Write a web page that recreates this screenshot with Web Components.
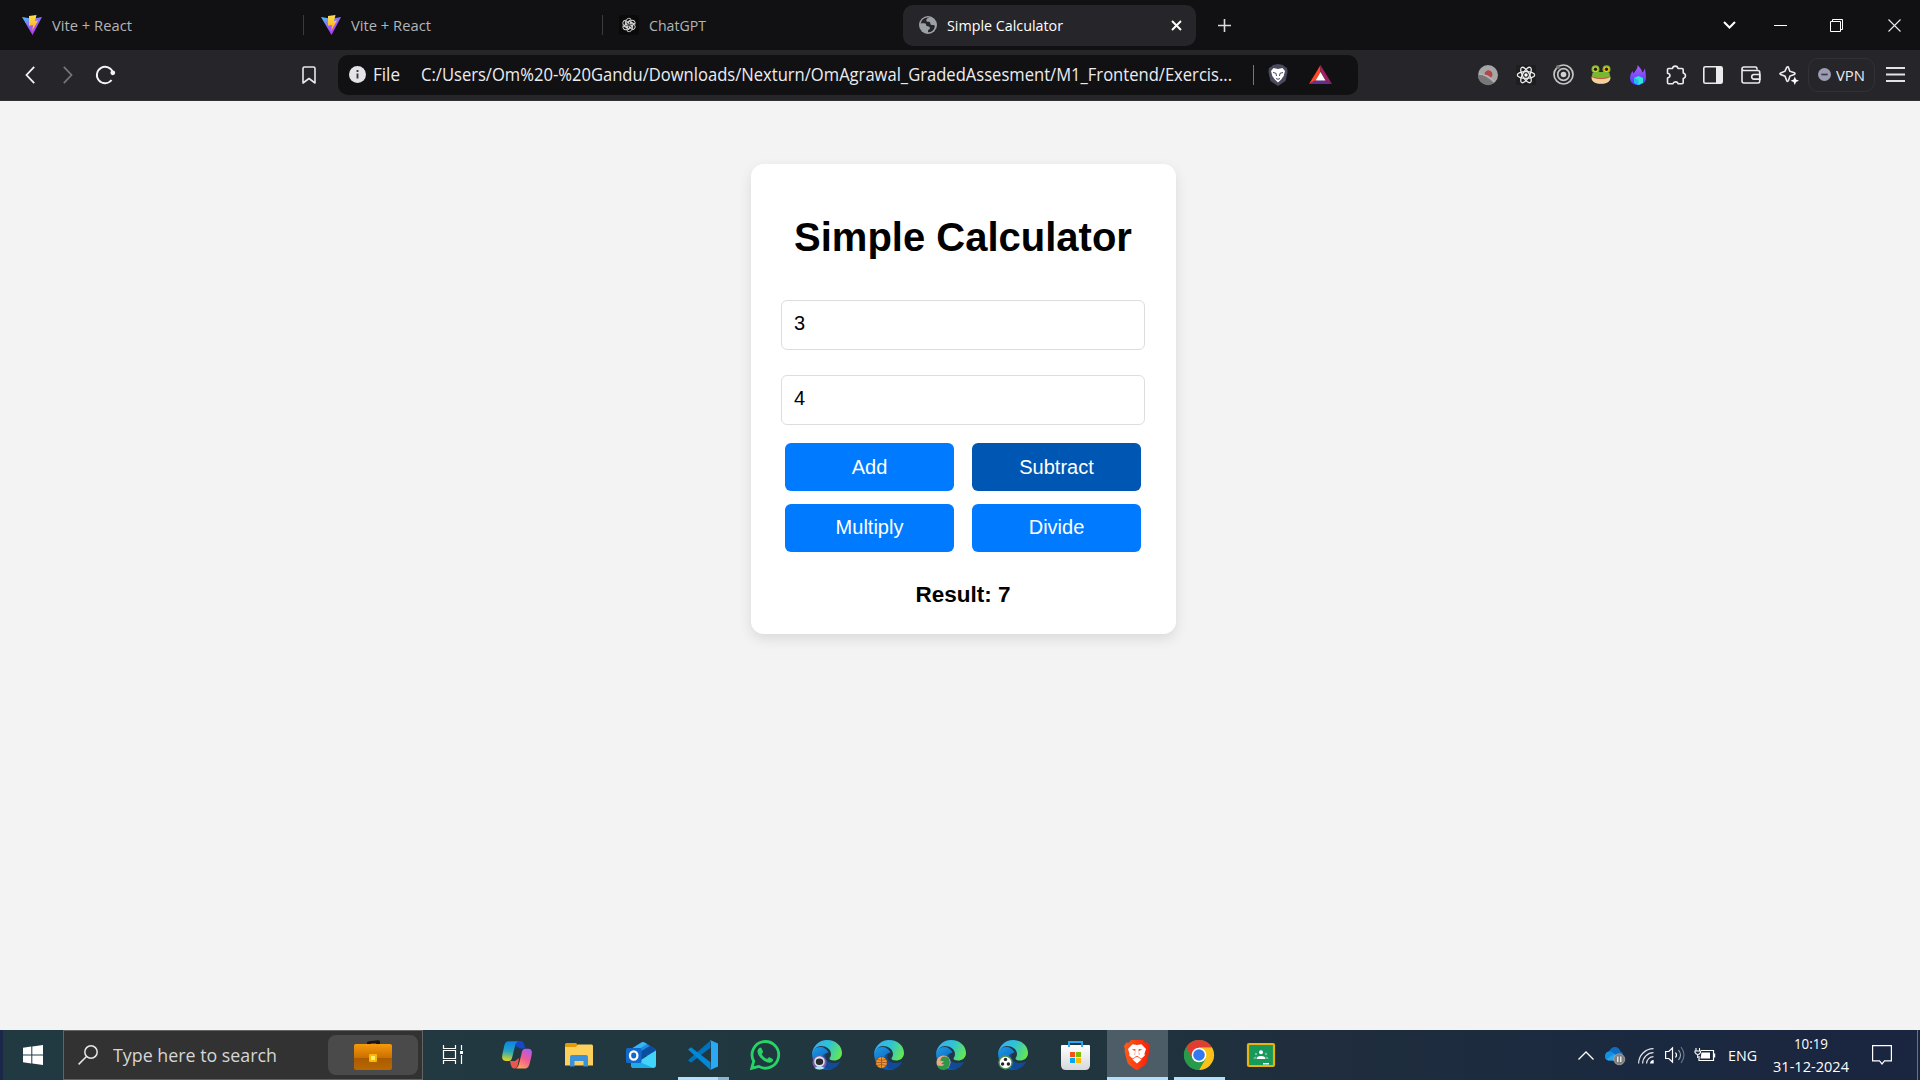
<!DOCTYPE html>
<html lang="en">
<head>
<meta charset="utf-8">
<title>Simple Calculator</title>
<style>
html,body{margin:0;height:100%;overflow:hidden;background:#f3f3f3}
</style>
</head>
<body>
<desktop-screen></desktop-screen>
<script>
const UI = '"Open Sans","Noto Sans",sans-serif';
const define = (name, html, init) => customElements.define(name, class extends HTMLElement {
  constructor() {
    super();
    this.attachShadow({ mode: 'open' });
  }
  connectedCallback() {
    this.shadowRoot.innerHTML = typeof html === 'function' ? html(this) : html;
    if (init) init(this);
  }
});

/* ---------- icons: [width, height, markup] ---------- */
const edge = badge => [30, 30, `
<defs><linearGradient id="a" x1="0" y1=".3" x2="1" y2=".6"><stop offset="0" stop-color="#38aef0"/><stop offset=".5" stop-color="#2fc3d6"/><stop offset="1" stop-color="#66e84f"/></linearGradient>
<linearGradient id="b" x1="0" y1="0" x2=".6" y2="1"><stop offset="0" stop-color="#1e9be6"/><stop offset="1" stop-color="#0a56b5"/></linearGradient></defs>
<path d="M.1 13.500C0 22 6 30 15 30c2 0 4-.4 5.500-1C14 28 10.500 23 11 18c.3-3 2-5 5.500-5.500C15 9 11.500 7 8 7 3.500 7 .5 10 .1 13.500z" fill="url(#b)"/>
<path d="M12 14.500C9 18 9.500 28 18.500 29.600c4-1 7.500-3.600 9.300-7 .3-.7-.2-1-.8-.7-6 2.500-12.500.5-13.500-4-.3-1.500 0-3 1-4z" fill="#114a99"/>
<path d="M.1 13.500C1 6 7 0 15 0c9 0 15 6 15 13 0 5-4 7.500-8 7.500-3 0-4.500-1-4.500-2 0-1 1.500-1.500 1.500-4.500C19 9 14 6 9 6 5 6 1.500 9 .1 13.500z" fill="url(#a)"/>${badge}`];

const ICONS = {
vite: [20, 20, `<defs><linearGradient id="a" x1="0" y1="0" x2=".6" y2="1"><stop offset="0" stop-color="#41c8ff"/><stop offset=".5" stop-color="#8d6bff"/><stop offset="1" stop-color="#c02cf5"/></linearGradient><linearGradient id="b" x1="0" y1="0" x2="0" y2="1"><stop offset="0" stop-color="#ffe04a"/><stop offset="1" stop-color="#ffa41c"/></linearGradient></defs><path d="M0 2l10.500 1.800L20 2l-9.500 18z" fill="url(#a)"/><path d="M7 1l7.500-1-1.500 6 3-.4L10.200 16l.8-6-4 .8z" fill="url(#b)"/>`],
gpt: [20, 20, `<rect width="20" height="20" rx="3" fill="#0a0a0a"/><g transform="translate(10 10) scale(.88) translate(-10 -10)" fill="none" stroke="#dcdcdc" stroke-width="1.050">${[0,60,120,180,240,300].map(r=>`<path transform="rotate(${r} 10 10)" d="M10 7.400L6.800 5.500V5A3.200 3.200 0 0 1 12.500 3.700L9.200 5.700V9.300M6.800 5.500V10.800"/>`).join('')}</g>`],
globe: [18, 18, `<circle cx="9" cy="9" r="9" fill="#9ba1a7"/><path d="M10.500 1.800c-2 .2-3.200 1-3.200 2.800 0 1 .8 1.200 2 1.200 1.500 0 2 .6 2 1.600 0 1.300 1 1.600 2.700 1.600 1.400 0 2 .6 1.700 2.200-.8 3-3.200 5-6.700 5l.2-2.500c1.400-.2 1.700-1 1.700-1.800 0-1.200-1-1.600-2.200-1.700-1.400-.2-1.600-.7-1.600-1.500C7.100 7.500 5.500 7 1.700 7.400 2.500 4.500 4 3 5.500 2.300 7 1.600 9 1.400 10.500 1.800z" fill="#26252a"/>`],
tabx: [11, 11, `<path d="M1 1l9 9M10 1l-9 9" stroke="#fff" stroke-width="1.900"/>`],
plus: [13, 13, `<path d="M6.500 0v13M0 6.500h13" stroke="#dcdcde" stroke-width="1.600"/>`],
chev: [13, 8, `<path d="M1 1l5.500 5.500L12 1" fill="none" stroke="#fff" stroke-width="2"/>`],
min: [13, 13, `<path d="M0 6.500h13" stroke="#fff"/>`],
restore: [13, 13, `<path d="M.5 2.500h10v10H.5zM2.500 2.500v-2h10v10h-2" fill="none" stroke="#fff"/>`],
close: [13, 13, `<path d="M.5.5l12 12M12.500.5l-12 12" stroke="#ececec" stroke-width="1.100"/>`],
back: [10, 18, `<path d="M9.200.8L1.500 9l7.700 8.200" fill="none" stroke="#f3f3f3" stroke-width="1.800"/>`],
fwd: [10, 18, `<path d="M.8.8L8.500 9 .8 17.200" fill="none" stroke="#747378" stroke-width="1.800"/>`],
reload: [20, 19, `<path d="M16.900 7.500A8.200 8.200 0 1 0 15.600 15" fill="none" stroke="#f3f3f3" stroke-width="1.900"/><circle cx="16.800" cy="7.800" r="2.400" fill="#f3f3f3"/>`],
bookmark: [14, 18, `<path d="M1 2.500Q1 1 2.500 1h9Q13 1 13 2.500V17l-6-4.500L1 17z" fill="none" stroke="#e8e8ea" stroke-width="1.600" stroke-linejoin="round"/>`],
info: [17, 17, `<circle cx="8.500" cy="8.500" r="8.500" fill="#e4e3e8"/><path d="M8.500 7.500v5M8.500 4v2" stroke="#3b3a3f" stroke-width="1.900"/>`],
lion: [20, 22, `<path d="M5 1l5-1 5 1 1.500 1.500L19 4l.6 4-2.100 9-7.500 5-7.500-5L.4 8 1 4l2.500-1.500z" fill="#4a4a5e"/><path d="M5.500 4l4.500 1 4.500-1L17 7l-1.300 5-2.500 3.500L10 18.500 6.800 15.500 4.300 12 3 7z" fill="#fff"/><path d="M5 8.500l3 .8.500 2.700M15 8.500l-3 .8-.5 2.700M8 14.500l2 .8 2-.8" stroke="#4a4a5e" fill="none" stroke-width="1"/>`],
bat: [23, 19, `<path d="M11.500 0L0 19l6.500-3.500L11.500 7z" fill="#ff4724"/><path d="M11.500 0L23 19l-6.500-3.500L11.500 7z" fill="#9e1f63"/><path d="M0 19h23l-6.500-3.700h-10z" fill="#662d91"/><path d="M11.500 7l5 8.500h-10z" fill="#fff"/>`],
disc: [20, 20, `<circle cx="10" cy="10" r="10" fill="#a6a6a6"/><path d="M0 9.500Q7 9 16 18A10 10 0 0 1 0 9.500z" fill="#777"/><path d="M6.500 9.500A4 4 0 1 1 13 12.500Q10 9.500 6.500 9.500" fill="#b64549"/><path d="M1 9Q8 9 17 17" stroke="#bbb" fill="none"/>`],
react: [20, 20, `<rect width="20" height="20" fill="#1e1e20"/><g fill="none" stroke="#ececec" stroke-width="1.300"><ellipse cx="10" cy="10" rx="8.700" ry="3.400"/><ellipse cx="10" cy="10" rx="8.700" ry="3.400" transform="rotate(60 10 10)"/><ellipse cx="10" cy="10" rx="8.700" ry="3.400" transform="rotate(120 10 10)"/></g><circle cx="10" cy="10" r="1.700" fill="#fff"/>`],
rings: [21, 21, `<g fill="none" stroke="#c6c6c6"><circle cx="10.500" cy="10.500" r="9.500" stroke-width="1.700"/><circle cx="10.500" cy="10.500" r="5.800" stroke-width="1.700"/></g><circle cx="10.500" cy="10.500" r="2.800" fill="#d0d0d0"/><circle cx="5" cy="3" r="2" fill="#777"/>`],
frog: [20, 19, `<path d="M1.500 8h17l1 5c0 4-5 5.500-9.500 5.500S.5 17 .5 13z" fill="#78b72f"/><path d="M.8 11.500c4 2.500 14.400 2.500 18.400 0C20 17 15 18.800 10 18.800S0 17 .8 11.500z" fill="#f6cf9f"/><path d="M.8 11.500c4 2.800 14.400 2.800 18.400 0" fill="none" stroke="#b53a2d" stroke-width=".8"/><circle cx="4.500" cy="4.200" r="4" fill="#78b72f"/><circle cx="15.500" cy="4.200" r="4" fill="#78b72f"/><path d="M3 7h14v4H3z" fill="#78b72f"/><circle cx="4.500" cy="4.200" r="2.800" fill="#f4c51c"/><circle cx="15.500" cy="4.200" r="2.800" fill="#f4c51c"/><circle cx="4.500" cy="4.200" r="1.700" fill="#282018"/><circle cx="15.500" cy="4.200" r="1.700" fill="#282018"/>`],
flame: [16, 20, `<defs><linearGradient id="a" x1=".5" y1="0" x2=".5" y2="1"><stop offset="0" stop-color="#b45cf5"/><stop offset="1" stop-color="#4b3dff"/></linearGradient></defs><path d="M7.500 0c.3 4-2.500 6-4 8.500-.6-.8-.8-1.500-.7-2.800C.8 8.500-.2 11 .1 14c.6 4 4 6 7.900 6s7.600-2.500 7.900-6c.2-3-.2-6-1-10.500-1 2-1.200 3-2.600 4C12 4.500 10 3 7.500 0z" fill="url(#a)"/><path d="M8.500 11l4.500 2v4.700L8.500 20 4 17.700V13z" fill="#2ee8d5"/><path d="M4 13l4.500 2v5L4 17.700z" fill="#26b7f0"/>`],
puzzle: [20, 20, `<path d="M1.500 4.500Q1.500 3.500 2.500 3.500H6.500C7 .3 11.500.3 12 3.500h4q1.200 0 1.200 1.200V8c3 .7 3 5 0 5.500v4q0 1.200-1.200 1.200H12c-.3-2.500-4.500-2.500-5 0H2.700q-1.200 0-1.200-1.200V13c3.300-.6 3.300-4.200 0-4.800z" fill="none" stroke="#ebebed" stroke-width="1.600" stroke-linejoin="round"/>`],
panel: [20, 18, `<rect x=".8" y=".8" width="18.400" height="16.400" rx="1.500" fill="none" stroke="#ebebed" stroke-width="1.600"/><path d="M13 1h6v16h-6z" fill="#ebebed"/>`],
wallet: [20, 18, `<path d="M1 3Q1 1 3 1h11.500q1.500 0 1.500 2.500M1 3q0 1.500 2 1.500h14q1.700 0 1.700 1.700V15.500q0 1.500-1.700 1.500H3q-2 0-2-2zM19 8.500h-6q-2.300 0-2.300 2.300t2.300 2.300h6z" fill="none" stroke="#ebebed" stroke-width="1.600"/>`],
spark: [20, 20, `<path d="M8.500 1.300Q9.300 1 9.600 2.200l1.200 3.500 4.500 1.600q1.500.9 0 1.700l-4.300 1.600-1.600 4.500q-.9 1.500-1.700 0L6 10.700 1.700 9q-1.500-.8 0-1.600L6 5.700 7.600 2.200Q8 1.200 8.500 1.300z" fill="none" stroke="#ebebed" stroke-width="1.600" transform="translate(0 .5)"/><path d="M15.800 11.500l1.200 3 3 1.300-3 1.200-1.200 3-1.200-3-3-1.200 3-1.300z" fill="#fff"/>`],
vpn: [13, 13, `<circle cx="6.500" cy="6.500" r="6.500" fill="#9c9db3"/><path d="M3.300 6.500h6.400" stroke="#3c3c4b" stroke-width="1.700"/>`],
menu: [19, 15, `<path d="M0 1h19M0 7.500h19M0 14h19" stroke="#e3e3e6" stroke-width="1.800"/>`],
win: [20, 20, `<path d="M0 2.800L8.300 1.600V9.500H0zM9.300 1.400L20 0v9.500H9.300zM0 10.500h8.300v8L0 17.200zM9.300 10.500H20V20l-10.700-1.400z" fill="#fff"/>`],
search: [20, 20, `<circle cx="13" cy="7" r="6.200" fill="none" stroke="#e8e8e8" stroke-width="1.500"/><path d="M8.500 11.500L.6 19.400" stroke="#e8e8e8" stroke-width="1.500"/>`],
chest: [38, 30, `<defs><linearGradient id="a" x1="0" y1="0" x2="0" y2="1"><stop offset="0" stop-color="#f79a0b"/><stop offset="1" stop-color="#c96f00"/></linearGradient><linearGradient id="b" x1="0" y1="0" x2="0" y2="1"><stop offset="0" stop-color="#994c00"/><stop offset="1" stop-color="#b96800"/></linearGradient></defs><path d="M13 4V2.500Q13 1.500 15 1.300L24 .2q2-.2 2 1.500V4h-4V3h-5v1z" fill="#161616"/><rect y="4" width="38" height="26" rx="2" fill="url(#b)"/><path d="M0 6q0-2 2-2h34q2 0 2 2v12H0z" fill="url(#a)"/><rect x="15" y="14" width="8" height="8" rx="1" fill="#f7b900"/><rect x="17" y="16" width="4" height="4" fill="#fff06a"/>`],
taskview: [20, 20, `<path d="M.5 0v3.500h12V0M.5 5.500h12v8H.5zM.5 19v-3.500h12V19M18.500 0v5M18.500 10v9" fill="none" stroke="#fff" stroke-width="1.200"/><rect x="17" y="6" width="3" height="3" fill="#fff"/>`],
copilot: [30, 28, `<defs><linearGradient id="a" x1=".4" y1="0" x2=".3" y2="1"><stop offset="0" stop-color="#0d83e8"/><stop offset=".5" stop-color="#22a6c0"/><stop offset="1" stop-color="#e8d51c"/></linearGradient><linearGradient id="b" x1=".8" y1="0" x2=".3" y2="1"><stop offset="0" stop-color="#ab5cf5"/><stop offset=".5" stop-color="#f25a91"/><stop offset="1" stop-color="#ffa35a"/></linearGradient></defs><path d="M14 0h5c2 0 3 2 3.700 5l.6 2.500H18L14 5z" fill="#1548c8"/><path d="M8 20h5l4-3-1 6c-.7 3-1.600 4.500-4 4.500-2.500 0-3.300-4-4-7.500z" fill="#ee554f"/><path d="M7 .2h9.500C14 .2 13 5 12 9l-1.700 7C9.600 18.800 9 20 6.500 20H3.700C0 20-.4 17 .5 13L2.200 5C3 2 4 .2 7 .2z" fill="url(#a)"/><path d="M23 27.500h-9.500c2.500 0 3.500-4.500 4.500-8.500l1.700-7c.7-2.800 1.500-4.200 4-4.200h2.600c3.700 0 4.100 3 3.200 7L27.800 22c-.8 3-1.800 5.500-4.800 5.500z" fill="url(#b)"/>`],
folder: [28, 24, `<path d="M0 1.500Q0 0 1.500 0H11l3 3-3 2H0z" fill="#e29b06"/><path d="M0 4h11l2-2.500h13.500Q28 1.500 28 3v19.500H0z" fill="#fcd05b"/><path d="M5 23.500V14q0-2 2-2h14q2 0 2 2v9.500h-4.500V18h-9v5.500z" fill="#3a92dc"/>`],
outlook: [30, 26, `<path d="M5 7L15.500.5q1.500-.8 3 0L30 7.500V14H5z" fill="#1a8de0"/><path d="M13 10.500L24 3.800l6 3.700v1L15.500 17z" fill="#0c4da2"/><path d="M5 7L15.500.5q1.500-.8 3 0l2.500 1.500L10 9z" fill="#35b6f2"/><path d="M14 18.500L30 8.500V23q0 3-3 3H8q-3 0-3-3v-4z" fill="#43d4fa"/><path d="M5 21h11l11.500 5H8q-3 0-3-3z" fill="#1eabe8"/><rect y="6" width="15.500" height="15" rx="1.500" fill="#1169cb"/><ellipse cx="7.700" cy="13.500" rx="3.700" ry="4.200" fill="none" stroke="#fff" stroke-width="2.300"/>`],
vscode: [30, 30, `<path d="M22.500.2V7.500L3 22.500 0 20z" fill="#0073bd" transform="translate(0 .2)"/><path d="M0 9.500l3-2.300 19.500 15V30z" fill="#0487d6"/><path d="M22 0l8 3.500v23L22 30q1-1 1-3V3q0-2-1-3z" fill="#2ba8f4"/>`],
whatsapp: [30, 30, `<path d="M1.800 28.200l1.900-7A13.300 13.300 0 1 1 8.800 26.400z" fill="none" stroke="#25d366" stroke-width="2.800"/><path d="M9 8.200q1.300-1.300 2.500 0L13 11.500q.3 1-1.300 2.500c1.200 2.500 3 4 5.500 5q1.500-2 2.300-1.700l3.200 1.600c.8.6.2 2.300-.7 3.100C18 25 7.800 18 7.500 11.500 7.500 10 8 9 9 8.200z" fill="#25d366"/>`],
edge1: edge(`<circle cx="7.500" cy="22.500" r="7" fill="#7f5aa8"/><circle cx="7.500" cy="21.500" r="5.300" fill="#cfe6ea"/><path d="M2.500 28q5-4 10 0-5 3-10 0z" fill="#a9e6f3"/><ellipse cx="7.500" cy="21.800" rx="3.700" ry="3.200" fill="#2d2730"/>`),
edge2: edge(`<circle cx="7.500" cy="22.500" r="6" fill="#6f4a34"/><circle cx="7.500" cy="22.500" r="5.400" fill="#f69632"/><path d="M7.500 17v11M2 22.500h11M3 19.500q4.500 1.800 9 0M3 25.500q4.500-1.800 9 0" fill="none" stroke="#a45a1c" stroke-width=".9"/>`),
edge3: edge(`<circle cx="7.500" cy="22.500" r="7" fill="#eaaa8a"/><path d="M6 17q4-1.500 7 1.500 1.500 3.500.5 7L10 29.400H4L1.500 25.500l4.500.500 2.500-1.500-3.500-.5 3-2.500-4-1z" fill="#2e9647"/>`),
edge4: edge(`<circle cx="7.500" cy="22.500" r="7.200" fill="#4e9157"/><circle cx="7.500" cy="22.500" r="5.800" fill="#fff"/><g fill="#222"><circle cx="7.500" cy="19.400" r="1.700"/><circle cx="4.600" cy="24" r="1.700"/><circle cx="10.400" cy="24" r="1.700"/></g>`),
store: [29, 30, `<defs><linearGradient id="a" x1="0" y1="0" x2="0" y2="1"><stop offset="0" stop-color="#fff"/><stop offset="1" stop-color="#d7d8da"/></linearGradient></defs><path d="M0 6q0-1 1-1h27q1 0 1 1v19q0 5-5 5H5q-5 0-5-5z" fill="url(#a)"/><path d="M8 7V2h13v5" fill="none" stroke="#28aaf0" stroke-width="1.900"/><path d="M9 12h5v5H9z" fill="#f1511b"/><path d="M15 12h5v5h-5z" fill="#80bc06"/><path d="M9 18h5v5H9z" fill="#05a6f0"/><path d="M15 18h5v5h-5z" fill="#ffba08"/>`],
brave: [26, 30, `<defs><linearGradient id="a"><stop offset="0" stop-color="#ff5b18"/><stop offset="1" stop-color="#f7200a"/></linearGradient></defs><path d="M7 0h12l2.200 2.700 2.300-.2L26 6l-.9 3 .3 2.200L22.700 22q-.5 1.800-2 3L14.500 29.500q-1.500 1-3 0L5.300 25q-1.500-1.200-2-3L.6 11.200.9 9 0 6l2.500-3.500 2.300.2z" fill="url(#a)"/><path d="M8.500 4.200l4.500.8 4.500-.8L22 9l-1.500 4.500 .3 2-3.300 3-3-1.500-.3-1.500 1.300-1-.7-3.500 3.500-1.500-3.500-.5L13 9.500 11.200 9l-3.500.5 3.500 1.500-.7 3.500 1.300 1-.3 1.500-3 1.500-3.300-3 .3-2L4 9z" fill="#fff"/><path d="M13 16.500l1.500 1 3 2L13 23.500 8.500 19.500l3-2z" fill="#fff"/><path d="M11.500 8.500h3l.5 7.500h-4z" fill="#fff"/>`],
chrome: [30, 30, `<circle cx="15" cy="15" r="15" fill="#34a853"/><path d="M2 7.500A15 15 0 0 1 28 7.500H15l-6.500 11z" fill="#e13d31"/><path d="M28 7.500A15 15 0 0 1 15 30l6.500-11.200L15 7.500z" fill="#fbc116"/><path d="M2 7.500A15 15 0 0 0 15 30l6.500-11.200h-13z" fill="#289b48"/><circle cx="15" cy="15" r="7.300" fill="#fff"/><circle cx="15" cy="15" r="5.800" fill="#3378ee"/>`],
classroom: [28, 24, `<rect x="1" y="1" width="26" height="22" rx="1" fill="#17995b" stroke="#e9b20d" stroke-width="2.200"/><circle cx="14" cy="9.300" r="2" fill="#fff"/><circle cx="9" cy="11" r="1.200" fill="#73c19b"/><circle cx="19" cy="11" r="1.200" fill="#73c19b"/><path d="M9.500 16q0-3 4.500-3t4.500 3z" fill="#fff"/><path d="M6.500 16q0-2.500 3-2.500l-1 2.500zM21.500 16q0-2.500-3-2.500l1 2.500z" fill="#73c19b"/><path d="M16 20h6v1.500h-6z" fill="#fff"/>`],
up: [16, 9, `<path d="M.5 8.500L8 1l7.500 7.500" fill="none" stroke="#fff" stroke-width="1.300"/>`],
onedrive: [20, 18, `<path d="M4 4.500Q6 0 10 0t5.500 4.500q2.500.5 2.500 4L9 12 .3 9Q.3 5 4 4.500z" fill="#0f6cc4"/><path d="M1 6q3-3 6.500-.5L15 10l-4 3.500H4Q0 13.500 0 9.500 0 7.500 1 6z" fill="#1490df"/><path d="M2 12l7-5 5 4v2.500H4q-1 0-2-1.500z" fill="#28a8ea"/><circle cx="14.300" cy="12.300" r="5.500" fill="#7f7f7f" stroke="#b3afac" stroke-width=".7"/><path d="M12.800 9.500v5.500M15.800 9.500v5.500" stroke="#fff" stroke-width="1.200"/>`],
wifi: [16, 16, `<g fill="none" stroke="#e5e7eb" stroke-width="1.200"><path d="M.6 15.500A15 15 0 0 1 15.500.6M4.600 15.500A11 11 0 0 1 15.500 4.600M8.600 15.500a7 7 0 0 1 6.900-6.900"/></g><path d="M12 15.500a4 4 0 0 1 1-2.500q1-1 2.700-1v3.500z" fill="#fff"/>`],
vol: [20, 18, `<path d="M.6 5.500h3.200L7.500 2v14l-3.700-3.500H.6z" fill="none" stroke="#fff" stroke-width="1.200"/><path d="M10.500 6.500q2 2.500 0 5" fill="none" stroke="#fff" stroke-width="1.200"/><path d="M13.500 4q4 5 0 10" fill="none" stroke="#a5abb7" stroke-width="1.100"/><path d="M16 1q6 8 0 16" fill="none" stroke="#6f798b" stroke-width="1.100"/>`],
battery: [20, 14, `<path d="M6 2.500h12.500v10H4V8" fill="none" stroke="#fff" stroke-width="1.200"/><path d="M6.500 4.500H15v6H5.500z" fill="#fff"/><path d="M19.600 5.500v4" stroke="#fff" stroke-width="1.200"/><path d="M1 0v3M4.500 0v3M0 3h5.500v1.500q-1 2-2.700 2T0 4.500zM2.700 6v4" stroke="#fff" fill="none" stroke-width="1.100"/>`],
note: [20, 20, `<path d="M.6.6h18.800v15.300H12.500L10 19l-2.500-3.100H.6z" fill="none" stroke="#fff" stroke-width="1.200"/>`]
};

define('ui-icon', el => {
  const [w, h, body] = ICONS[el.getAttribute('name')];
  return `<style>:host{display:block;flex:none;width:${w}px;height:${h}px}svg{display:block;overflow:visible}</style><svg width="${w}" height="${h}" viewBox="0 0 ${w} ${h}">${body}</svg>`;
});

/* A single line of interface text, condensed or widened to the width it is given. */
define('ui-label', `<style>:host{display:block;flex:none;white-space:nowrap;font-family:${UI};line-height:1.2}span{display:inline-block;transform-origin:0 50%}</style><span><slot></slot></span>`, el => {
  const want = +el.getAttribute('w');
  el.style.width = want + 'px';
  const fit = () => {
    const s = el.shadowRoot.querySelector('span');
    s.style.transform = 'none';
    const got = s.getBoundingClientRect().width;
    if (got) s.style.transform = `scaleX(${want / got})`;
  };
  fit();
  requestAnimationFrame(fit);
});

define('browser-tab', el => `<style>
:host{display:flex;align-items:center;box-sizing:border-box;flex:none;height:41px;font-size:15px;color:#b4b4b6}
:host([active]){background:#26252a;border-radius:10px;color:#fff}
ui-label{margin-left:10px}
</style><ui-icon name="${el.getAttribute('icon')}"></ui-icon><ui-label w="${el.getAttribute('text-width')}"><slot></slot></ui-label><slot name="end"></slot>`);

define('tab-strip', `<style>
:host{display:flex;align-items:center;height:50px;background:#111113;box-sizing:border-box;padding-left:22px}
i{flex:none;width:1px;height:20px;background:#3b3b3e}
.controls{display:flex;align-items:center;margin-left:auto;padding-right:19px}
</style>
<browser-tab icon="vite" text-width="80" style="width:281px">Vite + React</browser-tab><i></i>
<browser-tab icon="vite" text-width="80" style="width:281px;margin-left:17px">Vite + React</browser-tab><i></i>
<browser-tab icon="gpt" text-width="57" style="width:284px;margin-left:16px">ChatGPT</browser-tab>
<browser-tab active icon="globe" text-width="116" style="width:293px;padding-left:16px">Simple Calculator<ui-icon slot="end" name="tabx" style="margin-left:108px"></ui-icon></browser-tab>
<ui-icon name="plus" style="margin-left:22px"></ui-icon>
<div class="controls"><ui-icon name="chev"></ui-icon><ui-icon name="min" style="margin-left:38px"></ui-icon><ui-icon name="restore" style="margin-left:43px"></ui-icon><ui-icon name="close" style="margin-left:45px"></ui-icon></div>`);

define('address-bar', `<style>
:host{display:flex;align-items:center;flex:none;box-sizing:border-box;width:1020px;height:40px;border-radius:10px;background:#111113;padding-left:11px;font-size:17.500px;color:#ececf0}
i{width:1px;height:20px;background:#77767b;margin-left:21px}
</style>
<ui-icon name="info"></ui-icon><ui-label w="27" style="margin-left:7px">File</ui-label>
<ui-label w="811" style="margin-left:21px">C:/Users/Om%20-%20Gandu/Downloads/Nexturn/OmAgrawal_GradedAssesment/M1_Frontend/Exercis...</ui-label>
<i></i><ui-icon name="lion" style="margin-left:14px"></ui-icon><ui-icon name="bat" style="margin-left:21px"></ui-icon>`);

define('tool-bar', `<style>
:host{display:flex;align-items:center;height:51px;box-sizing:border-box;background:#26252a;padding:0 15px 1px 25px;border-bottom:1px solid #302f34}
.ext{display:flex;align-items:center;margin-left:auto}
.vpn{display:flex;align-items:center;box-sizing:border-box;width:67px;height:34px;margin-left:9px;padding-left:9px;border:1px solid #323137;border-radius:10px;font-size:15px;color:#ececf0}
</style>
<ui-icon name="back"></ui-icon><ui-icon name="fwd" style="margin-left:28px"></ui-icon><ui-icon name="reload" style="margin-left:23px"></ui-icon>
<ui-icon name="bookmark" style="margin-left:186px"></ui-icon>
<address-bar style="margin-left:22px"></address-bar>
<div class="ext">
<ui-icon name="disc"></ui-icon><ui-icon name="react" style="margin-left:18px"></ui-icon><ui-icon name="rings" style="margin-left:17px"></ui-icon><ui-icon name="frog" style="margin-left:17px"></ui-icon><ui-icon name="flame" style="margin-left:19px"></ui-icon><ui-icon name="puzzle" style="margin-left:20px"></ui-icon><ui-icon name="panel" style="margin-left:17px"></ui-icon><ui-icon name="wallet" style="margin-left:18px"></ui-icon><ui-icon name="spark" style="margin-left:18px"></ui-icon>
<div class="vpn"><ui-icon name="vpn"></ui-icon><ui-label w="29" style="margin-left:5px">VPN</ui-label></div>
<ui-icon name="menu" style="margin-left:11px"></ui-icon></div>`);

define('number-field', el => `<style>
:host{display:block}
input{display:block;box-sizing:border-box;width:100%;height:50px;border:1px solid #ddd;border-radius:6px;padding:0 12px 3px;background:#fff;color:#000;font:20px "Liberation Sans",Arial,sans-serif;outline:0}
</style><input type="text" value="${el.getAttribute('value')}">`);

define('calc-button', `<style>
:host{display:block}
button{display:block;width:100%;height:48px;border:0;border-radius:6px;padding:0 0 1px;background:#007bff;color:#fff;font:20px/24px "Liberation Sans",Arial,sans-serif}
:host([pressed]) button{background:#0056b3}
:host([low]) button{padding-bottom:3px}
</style><button><slot></slot></button>`);

define('simple-calculator', `<style>
:host{display:block;box-sizing:border-box;width:425px;height:470px;padding:50px 31px 0 30px;border-radius:12.500px;background:#fff;box-shadow:0 5px 12.500px rgba(0,0,0,.1);font-family:"Liberation Sans",Arial,sans-serif;color:#000;text-align:center}
h1{margin:0 -10px 40px;font-size:40px;line-height:46px;white-space:nowrap}
.fields{display:grid;gap:25px}
.keys{display:grid;grid-template-columns:169px 169px;gap:13px 18px;margin:18px 0 0 4px}
p{margin:30px 0 0;font-size:22.500px;line-height:26px;font-weight:700}
</style>
<h1>Simple Calculator</h1>
<div class="fields"><number-field value="3"></number-field><number-field value="4"></number-field></div>
<div class="keys"><calc-button>Add</calc-button><calc-button pressed>Subtract</calc-button><calc-button low>Multiply</calc-button><calc-button low>Divide</calc-button></div>
<p>Result: 7</p>`);

define('task-item', el => `<style>
:host{display:grid;grid-template-rows:47px 3px;box-sizing:border-box;width:62px;height:50px;flex:none}
.i{display:flex;align-items:center;justify-content:center;padding-top:3px}
.u{display:flex;justify-content:center}
.u b{width:51px;background:#b3dfff}
:host([active]){background:linear-gradient(90deg,transparent 1px,#4d5d68 1px)}
:host([active]) .u b{width:61px;margin-left:1px}
:host([stacked]) .u b:first-child{width:40px}
:host([stacked]) .u b+b{width:11px;background:#8db4d0}
</style><div class="i"><ui-icon name="${el.getAttribute('icon')}"></ui-icon></div><div class="u">${el.hasAttribute('running') ? '<b></b>' : ''}${el.hasAttribute('stacked') ? '<b></b>' : ''}</div>`);

define('search-box', `<style>
:host{display:flex;align-items:center;flex:none;box-sizing:border-box;width:360px;height:50px;border:1px solid #646464;background:#323232;padding-left:14px;font-size:18.750px;color:#d6d6d6}
.c{display:flex;justify-content:center;align-items:center;width:90px;height:40px;border-radius:8px;background:#4a4a4a;margin-left:51px}
</style><ui-icon name="search"></ui-icon><ui-label w="164" style="margin-left:15px">Type here to search</ui-label><div class="c"><ui-icon name="chest"></ui-icon></div>`);

define('system-tray', `<style>
:host{display:flex;align-items:center;margin-left:auto;height:50px;color:#fff;font-size:15px}
.clock{display:flex;flex-direction:column;align-items:center;width:76px;margin-left:16px;gap:5px;padding-bottom:1px}
i{width:1px;height:50px;background:#6b7486;margin:0 2px 0 25px}
</style>
<ui-icon name="up"></ui-icon><ui-icon name="onedrive" style="margin-left:11px;margin-top:2px"></ui-icon><ui-icon name="wifi" style="margin-left:13px;margin-top:2px"></ui-icon><ui-icon name="vol" style="margin-left:11px"></ui-icon><ui-icon name="battery" style="margin-left:10px"></ui-icon>
<ui-label w="29" style="margin-left:13px">ENG</ui-label>
<div class="clock"><ui-label w="34">10:19</ui-label><ui-label w="76">31-12-2024</ui-label></div>
<ui-icon name="note" style="margin-left:23px"></ui-icon><i></i>`);

define('task-bar', `<style>
:host{display:flex;align-items:center;height:50px;background:linear-gradient(90deg,#1b2748 3px,#213a42 3px,#21363f 55%,#1f2d3d 68%,#1b2a3f 82%,#1a2540)}
</style>
<ui-icon name="win" style="margin:0 20px 0 23px"></ui-icon><search-box></search-box>
<ui-icon name="taskview" style="margin:0 23px 0 20px"></ui-icon>
<task-item icon="copilot"></task-item><task-item icon="folder"></task-item><task-item icon="outlook"></task-item><task-item icon="vscode" running stacked></task-item><task-item icon="whatsapp"></task-item><task-item icon="edge1"></task-item><task-item icon="edge2"></task-item><task-item icon="edge3"></task-item><task-item icon="edge4"></task-item><task-item icon="store"></task-item><task-item icon="brave" active running></task-item><task-item icon="chrome" running></task-item><task-item icon="classroom"></task-item>
<system-tray></system-tray>`);

define('desktop-screen', `<style>
:host{display:grid;grid-template-rows:50px 51px 1fr 50px;width:1920px;height:1080px;overflow:hidden}
main{display:flex;justify-content:center;align-items:flex-start;background:#f3f3f3;padding:63px 0 0 7px}
</style><tab-strip></tab-strip><tool-bar></tool-bar><main><simple-calculator></simple-calculator></main><task-bar></task-bar>`);
</script>
</body>
</html>
